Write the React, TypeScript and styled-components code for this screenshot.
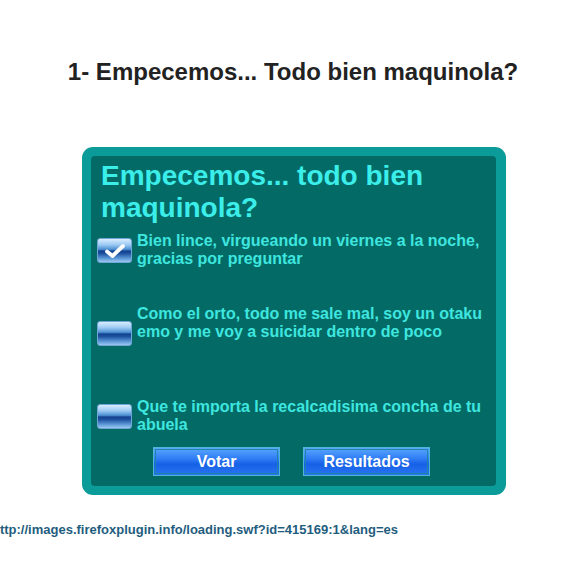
import styled, { createGlobalStyle } from 'styled-components';

const GlobalStyle = createGlobalStyle`
  html, body {
    margin: 0;
    padding: 0;
    background: #ffffff;
  }
  body {
    font-family: 'Liberation Sans', Arial, sans-serif;
  }
`;

const Page = styled.div`
  width: 584px;
  height: 568px;
  overflow: hidden;
  display: flex;
  flex-direction: column;
`;

const PageTitle = styled.h1`
  margin: 58px 0 0;
  text-align: center;
  font-size: 24px;
  line-height: 28px;
  font-weight: bold;
  color: #222222;
  padding-left: 2px;
`;

const Card = styled.div`
  width: 424px;
  height: 348px;
  box-sizing: border-box;
  margin: 61px 0 0 82px;
  padding: 9px 10px 9px 9px;
  background: #0b9b98;
  border-radius: 11px;
`;

const Panel = styled.div`
  height: 100%;
  box-sizing: border-box;
  padding: 4px 10px 0 6px;
  background: #036a66;
  border-radius: 4px;
  display: flex;
  flex-direction: column;
`;

const Heading = styled.h2`
  margin: 0 0 0 4px;
  font-size: 28px;
  line-height: 32px;
  font-weight: bold;
  color: #3beeea;
`;

const Option = styled.label<{ $gap: number }>`
  display: flex;
  align-items: flex-start;
  gap: 5px;
  margin-top: ${(p) => p.$gap}px;
  cursor: pointer;
`;

const Box = styled.span<{ $drop: number }>`
  flex: none;
  width: 35px;
  height: 25px;
  margin-top: ${(p) => p.$drop}px;
  border-radius: 3px;
  box-sizing: border-box;
  border: 1px solid #6fa6d6;
  background: linear-gradient(
    to bottom,
    #d8ecff 0%,
    #9ccaf3 25%,
    #4d8fd2 45%,
    #13428f 52%,
    #1b4f9d 62%,
    #5f9bd8 85%,
    #9cc8f0 100%
  );
  display: flex;
  align-items: center;
  justify-content: center;
`;

const OptionText = styled.span`
  font-size: 16px;
  line-height: 18px;
  font-weight: bold;
  color: #3ee6df;
`;

const ButtonRow = styled.div`
  display: flex;
  justify-content: center;
  gap: 23px;
  margin-top: 13px;
`;

const PollButton = styled.button`
  width: 127px;
  height: 29px;
  box-sizing: border-box;
  border: 1px solid #4fb6d8;
  outline: 1px solid #1b86a8;
  outline-offset: -3px;
  background: linear-gradient(
    to bottom,
    #5aa6ff 0%,
    #2f7cf4 40%,
    #1660e6 60%,
    #2a74f2 100%
  );
  color: #ffffff;
  font-family: 'Liberation Sans', Arial, sans-serif;
  font-size: 16px;
  font-weight: bold;
  padding: 0;
  cursor: pointer;
`;

const SourceLink = styled.div`
  margin: 27px 0 0 -8px;
  font-size: 13px;
  font-weight: bold;
  color: #1f5d7e;
  white-space: nowrap;
`;

const Check = () => (
  <svg width="22" height="16" viewBox="0 0 22 16">
    <path
      d="M3 8.5 L8.5 13 L19 3"
      fill="none"
      stroke="#ffffff"
      strokeWidth="3.8"
      strokeLinecap="round"
      strokeLinejoin="round"
    />
  </svg>
);

const options = [
  {
    text: 'Bien lince, virgueando un viernes a la noche, gracias por preguntar',
    gap: 8,
    drop: 6,
    checked: true,
  },
  {
    text: 'Como el orto, todo me sale mal, soy un otaku emo y me voy a suicidar dentro de poco',
    gap: 37,
    drop: 16,
    checked: false,
  },
  {
    text: 'Que te importa la recalcadisima concha de tu abuela',
    gap: 52,
    drop: 6,
    checked: false,
  },
];

const App = () => {
  return (
    <Page>
      <GlobalStyle />
      <PageTitle>1- Empecemos... Todo bien maquinola?</PageTitle>

      <Card>
        <Panel>
          <Heading>
            Empecemos... todo bien
            <br />
            maquinola?
          </Heading>

          {options.map((o) => (
            <Option key={o.text} $gap={o.gap}>
              <Box $drop={o.drop}>{o.checked && <Check />}</Box>
              <OptionText>{o.text}</OptionText>
            </Option>
          ))}

          <ButtonRow>
            <PollButton>Votar</PollButton>
            <PollButton>Resultados</PollButton>
          </ButtonRow>
        </Panel>
      </Card>

      <SourceLink>http://images.firefoxplugin.info/loading.swf?id=415169:1&amp;lang=es</SourceLink>
    </Page>
  );
};

export default App;
